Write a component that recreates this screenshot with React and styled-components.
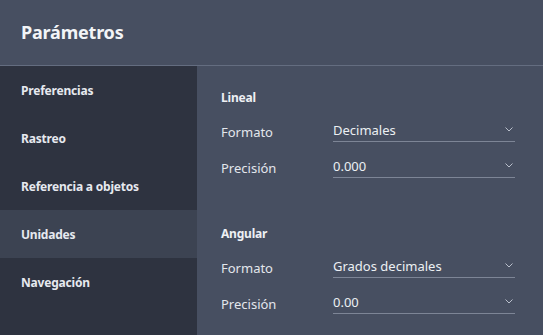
import React from 'react';
import styled, { createGlobalStyle } from 'styled-components';

const Global = createGlobalStyle`
  html, body { margin: 0; padding: 0; background: #474f61; }
  body { font-family: "Noto Sans", "Open Sans", sans-serif; }
`;

const Panel = styled.div`
  width: 543px;
  height: 335px;
  display: flex;
  flex-direction: column;
  background: #474f61;
  color: #eceff4;
  overflow: hidden;
`;

const Header = styled.header`
  height: 65px;
  flex-shrink: 0;
  display: flex;
  align-items: center;
  padding-left: 21px;
  border-bottom: 1px solid #646d80;
  h1 {
    margin: 0 0 2px;
    font-size: 18px;
    font-weight: 700;
    letter-spacing: -0.2px;
    color: #f2f4f7;
  }
`;

const Body = styled.div`
  flex: 1;
  display: flex;
`;

const Sidebar = styled.nav`
  width: 197px;
  flex-shrink: 0;
  background: #2e3340;
  display: flex;
  flex-direction: column;
`;

const NavItem = styled.div`
  height: 48px;
  display: flex;
  align-items: center;
  padding-left: 21px;
  font-size: 12px;
  font-weight: 700;
  letter-spacing: -0.2px;
  color: #e6e9ef;
  background: ${p => (p.active ? '#3c4352' : 'transparent')};
`;

const Content = styled.main`
  flex: 1;
  padding: 24px 28px 0 24px;
  display: flex;
  flex-direction: column;
  gap: 48px;
`;

const Section = styled.section`
  display: flex;
  flex-direction: column;
`;

const SectionTitle = styled.div`
  font-size: 12px;
  font-weight: 700;
  letter-spacing: -0.2px;
  color: #eef0f4;
  height: 16px;
  line-height: 16px;
`;

const Row = styled.div`
  display: grid;
  grid-template-columns: 112px 182px;
  align-items: end;
  height: 36px;
`;

const Label = styled.div`
  font-size: 13px;
  color: #e3e6ec;
  padding-bottom: 1px;
`;

const Select = styled.div`
  display: flex;
  align-items: center;
  justify-content: space-between;
  height: 24px;
  border-bottom: 1px solid #7d8596;
  font-size: 13px;
  color: #eceff3;
  box-sizing: border-box;
  svg { margin-right: 2px; }
`;

const Chevron = () => (
  <svg width="8" height="5" viewBox="0 0 8 5" fill="none">
    <path d="M0.5 0.5 L4 4 L7.5 0.5" stroke="#b9bfcb" strokeWidth="1" />
  </svg>
);

const Field = ({ label, value }) => (
  <Row>
    <Label>{label}</Label>
    <Select>
      <span>{value}</span>
      <Chevron />
    </Select>
  </Row>
);

export default function App() {
  const nav = ['Preferencias', 'Rastreo', 'Referencia a objetos', 'Unidades', 'Navegación'];
  return (
    <Panel>
      <Global />
      <Header>
        <h1>Parámetros</h1>
      </Header>
      <Body>
        <Sidebar>
          {nav.map(n => (
            <NavItem key={n} active={n === 'Unidades'}>{n}</NavItem>
          ))}
        </Sidebar>
        <Content>
          <Section>
            <SectionTitle>Lineal</SectionTitle>
            <Field label="Formato" value="Decimales" />
            <Field label="Precisión" value="0.000" />
          </Section>
          <Section>
            <SectionTitle>Angular</SectionTitle>
            <Field label="Formato" value="Grados decimales" />
            <Field label="Precisión" value="0.00" />
          </Section>
        </Content>
      </Body>
    </Panel>
  );
}
